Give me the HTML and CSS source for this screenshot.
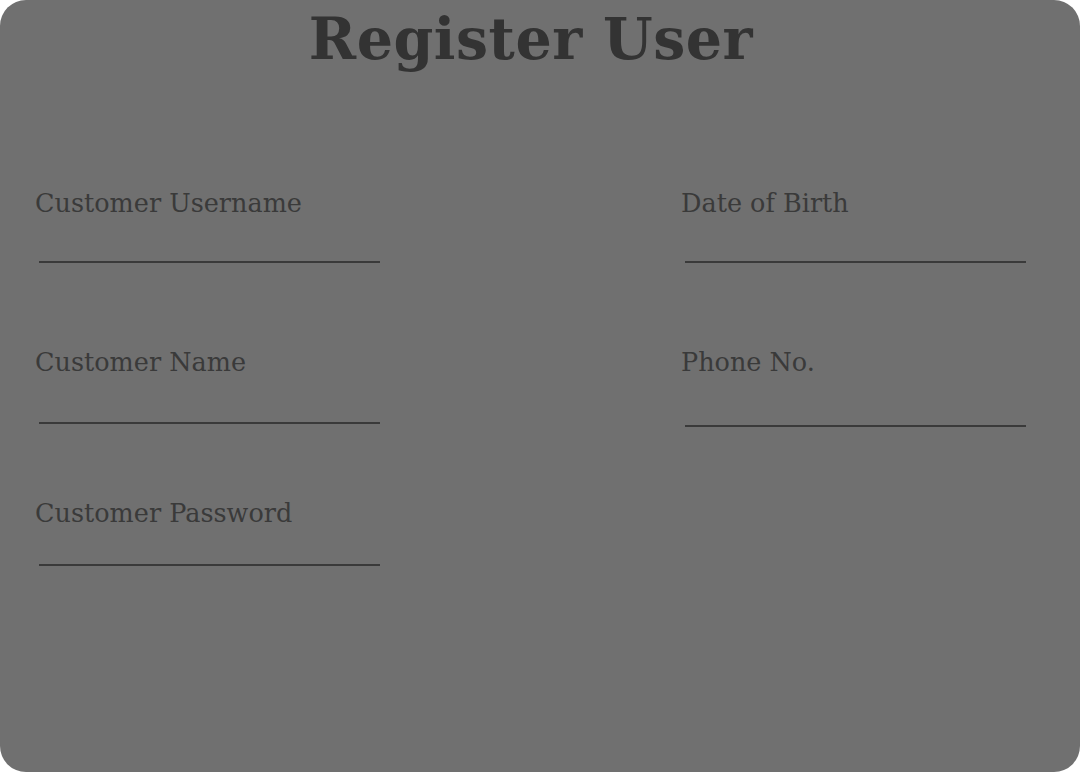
FILE: index.html
```html
<!DOCTYPE html>
<html>
<head>
<meta charset="utf-8">
<link rel="stylesheet" href="styles.css">
</head>
<body>
<div class="card">
  <h1 class="title">Register User</h1>
  <div class="form">
    <div class="col col-left">
      <div class="field f1">
        <label class="label">Customer Username</label>
        <div class="line"></div>
      </div>
      <div class="field f2">
        <label class="label">Customer Name</label>
        <div class="line"></div>
      </div>
      <div class="field f3">
        <label class="label">Customer Password</label>
        <div class="line"></div>
      </div>
    </div>
    <div class="col col-right">
      <div class="field f1">
        <label class="label">Date of Birth</label>
        <div class="line"></div>
      </div>
      <div class="field f2">
        <label class="label">Phone No.</label>
        <div class="line"></div>
      </div>
    </div>
  </div>
</div>
</body>
</html>
```
FILE: styles.css
```css
html, body {
  margin: 0;
  padding: 0;
  background: #ffffff;
}
.card {
  width: 1080px;
  height: 772px;
  background: #707070;
  border-radius: 26px;
  overflow: hidden;
}
.title {
  margin: 0;
  padding-top: 6px;
  padding-right: 18px;
  text-align: center;
  font-family: "DejaVu Serif", serif;
  font-weight: bold;
  font-size: 57px;
  letter-spacing: 0.5px;
  line-height: 66px;
  color: #333333;
}
.form {
  display: grid;
  grid-template-columns: 646px 1fr;
  padding-left: 35px;
  padding-top: 116px;
}
.col {
  display: flex;
  flex-direction: column;
}
.label {
  display: block;
  font-family: "DejaVu Serif", serif;
  font-size: 25.5px;
  line-height: 30px;
  color: #3a3a3a;
}
.line {
  margin-left: 4px;
  margin-top: 43px;
  width: 341px;
  height: 0;
  border-bottom: 2px solid #3a3a3a;
}
.f2 { margin-top: 84px; }
.f2 .line { margin-top: 45px; }
.col-right .f2 .line { margin-top: 48px; }
.f3 { margin-top: 74px; }
.f3 .line { margin-top: 36px; }
```
